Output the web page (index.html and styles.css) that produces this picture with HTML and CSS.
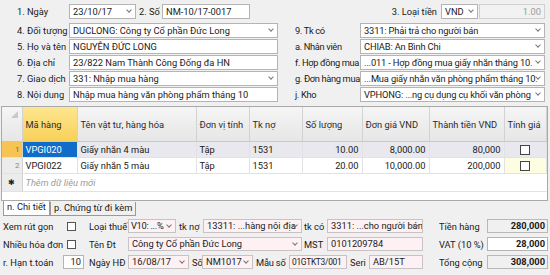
FILE: index.html
```html
<!DOCTYPE html>
<html lang="vi">
<head>
    <meta charset="UTF-8">
    <title>Nhập mua hàng</title>
    <link rel="stylesheet" href="styles.css">
</head>
<body>

    <div class="top">
        <div class="row">
            <label class="lbl">1. Ngày</label>
            <div class="box sel w-date">23/10/17</div>
            <label class="lbl-so">2. Số</label>
            <div class="box w-so">NM-10/17-0017</div>
            <div class="right-group">
                <label class="lbl-tien">3. Loại tiền</label>
                <div class="box sel w-vnd">VND</div>
                <div class="box off w-rate">1.00</div>
            </div>
        </div>
        <div class="row row-gap">
            <label class="lbl">4. Đối tượng</label>
            <div class="box sel w-left">DUCLONG: Công ty Cổ phần Đức Long</div>
            <label class="lbl-r">9. Tk có</label>
            <div class="box sel w-right">3311: Phải trả cho người bán</div>
        </div>
        <div class="row">
            <label class="lbl">5. Họ và tên</label>
            <div class="box w-left">NGUYỄN ĐỨC LONG</div>
            <label class="lbl-r">a. Nhân viên</label>
            <div class="box sel w-right">CHIAB: An Bình Chi</div>
        </div>
        <div class="row">
            <label class="lbl">6. Địa chỉ</label>
            <div class="box w-left">23/822 Nam Thành Công Đống đa HN</div>
            <label class="lbl-r">f. Hợp đồng mua</label>
            <div class="box sel w-right">...011 - Hợp đồng mua giấy nhắn tháng 10.</div>
        </div>
        <div class="row">
            <label class="lbl">7. Giao dịch</label>
            <div class="box sel w-left">331: Nhập mua hàng</div>
            <label class="lbl-r">g. Đơn hàng mua</label>
            <div class="box sel w-right">...Mua giấy nhắn văn phòng phẩm tháng 10.</div>
        </div>
        <div class="row">
            <label class="lbl">8. Nội dung</label>
            <div class="box w-left">Nhập mua hàng văn phòng phẩm tháng 10</div>
            <label class="lbl-r">j. Kho</label>
            <div class="box sel w-right">VPHONG: ...ng cụ dụng cụ khối văn phòng</div>
        </div>
    </div>

    <div class="grid">
        <table>
            <colgroup>
                <col style="width:20px"><col style="width:55px"><col style="width:119px">
                <col style="width:53px"><col style="width:53px"><col style="width:60px">
                <col style="width:67px"><col style="width:75px"><col>
            </colgroup>
            <tr class="head">
                <th class="corner"><span class="tri"></span></th>
                <th class="hot">Mã hàng</th>
                <th>Tên vật tư, hàng hóa</th>
                <th>Đơn vị tính</th>
                <th>Tk nợ</th>
                <th>Số lượng</th>
                <th>Đơn giá VND</th>
                <th>Thành tiền VND</th>
                <th>Tính giá</th>
            </tr>
            <tr class="cur">
                <td class="ind ind-cur">1</td>
                <td class="picked">VPGI020</td>
                <td>Giấy nhắn 4 màu</td>
                <td>Tập</td>
                <td>1531</td>
                <td class="num">10.00</td>
                <td class="num">8,000.00</td>
                <td class="num">80,000</td>
                <td class="chk"><span class="cb"></span></td>
            </tr>
            <tr>
                <td class="ind">2</td>
                <td>VPGI022</td>
                <td>Giấy nhắn 5 màu</td>
                <td>Tập</td>
                <td>1531</td>
                <td class="num">20.00</td>
                <td class="num">10,000.00</td>
                <td class="num">200,000</td>
                <td class="chk focus"><span class="cb"></span></td>
            </tr>
            <tr class="newrow">
                <td class="ind star">✱</td>
                <td colspan="8" class="hint">Thêm dữ liệu mới</td>
            </tr>
        </table>
    </div>

    <div class="tabs">
        <div class="tab active">n. Chi tiết</div>
        <div class="tab">p. Chứng từ đi kèm</div>
    </div>

    <div class="bottom">
        <div class="brow">
            <label class="b-lbl">Xem rút gọn</label>
            <span class="cb cb-form"></span>
            <label class="b-lbl2">Loại thuế</label>
            <div class="box sel pink w-thue">V10: ...%</div>
            <label class="b-lbl3">tk nợ</label>
            <div class="box sel pink w-tkno">13311: ...hàng nội địa</div>
            <label class="b-lbl4">tk có</label>
            <div class="box sel pink w-tkco">3311: ...cho người bán</div>
            <label class="b-tot">Tiền hàng</label>
            <div class="box total off-tot">280,000</div>
        </div>
        <div class="brow">
            <label class="b-lbl">Nhiều hóa đơn</label>
            <span class="cb cb-form"></span>
            <label class="b-lbl2">Tên Đt</label>
            <div class="box sel pink w-tendt">Công ty Cổ phần Đức Long</div>
            <label class="b-lbl4">MST</label>
            <div class="box pink w-tkco">0101209784</div>
            <label class="b-tot">VAT (10 %)</label>
            <div class="box total">28,000</div>
        </div>
        <div class="brow">
            <label class="b-lbl b-han">r. Hạn t.toán</label>
            <div class="box w-han">10</div>
            <label class="b-lbl2 near">Ngày HĐ</label>
            <div class="box sel pink w-ngayhd">16/08/17</div>
            <label class="b-so">Số</label>
            <div class="box sel pink w-sohd">NM1017</div>
            <label class="b-mau">Mẫu số</label>
            <div class="box pink w-mau">01GTKT3/001</div>
            <label class="b-seri">Seri</label>
            <div class="box pink w-seri">AB/15T</div>
            <label class="b-tot">Tổng cộng</label>
            <div class="box total off-tot">308,000</div>
        </div>
    </div>

</body>
</html>
```

FILE: styles.css
```css
body {
    margin: 0;
    background-color: #f0f0f0;
    font-family: 'Roboto', 'Noto Sans', sans-serif;
    font-size: 9.3px;
    color: #1a1a1a;
    width: 550px;
    height: 275px;
    overflow: hidden;
}

/* ---------- top form ---------- */
.top {
    padding: 4px 0 0 17px;
}

.row {
    display: flex;
    align-items: center;
    height: 15px;
    margin-bottom: 1px;
}

.row > *, .right-group > *, .brow > * {
    flex-shrink: 0;
}

.row-gap {
    margin-top: 4px;
}

.lbl {
    width: 52px;
    white-space: nowrap;
}

.lbl-r {
    width: 65px;
    margin-left: 17px;
    white-space: nowrap;
    letter-spacing: -0.35px;
}

.lbl-so {
    width: 23px;
    margin-left: 3px;
    white-space: nowrap;
}

.right-group {
    display: flex;
    align-items: center;
    margin-left: auto;
    margin-right: 5px;
}

.lbl-tien {
    margin-right: 4px;
}

.box {
    position: relative;
    box-sizing: border-box;
    height: 15px;
    line-height: 13px;
    padding: 0 3px;
    background: #fff;
    border: 1px solid #b4b4b4;
    white-space: nowrap;
    overflow: hidden;
}

.sel {
    padding-right: 12px;
}

.sel::after {
    content: "";
    position: absolute;
    right: 4px;
    top: 3px;
    width: 3px;
    height: 3px;
    border-right: 1px solid #777;
    border-bottom: 1px solid #777;
    transform: rotate(45deg);
}

.off {
    background: #f2f2f2;
    border-color: #d0d0d0;
    color: #9a9a9a;
    text-align: right;
}

.w-date { width: 67px; }
.w-so { width: 88px; }
.w-vnd { width: 37px; }
.w-rate { width: 66px; margin-left: 1px; }
.w-left { width: 209px; }
.w-right { width: 185px; letter-spacing: -0.15px; }

/* ---------- grid ---------- */
.grid {
    margin: 4px 2px 0 1px;
    height: 95px;
    background: #fff;
    border: 1px solid #a9a9a9;
    box-sizing: border-box;
}

table {
    width: 100%;
    border-collapse: collapse;
    table-layout: fixed;
}

th, td {
    white-space: nowrap;
    overflow: hidden;
    padding: 0 3px;
    text-align: left;
    font-weight: normal;
}

th {
    height: 34px;
    background: linear-gradient(#f5f5f5, #e6e6e6);
    border-right: 1px solid #d2d2d2;
    border-bottom: 1px solid #c8c8c8;
    color: #2a2a2a;
}

th.hot {
    background: linear-gradient(#fde68f, #f8d058);
}

th.corner {
    position: relative;
    vertical-align: top;
}

.tri {
    position: absolute;
    left: 9px;
    top: 4px;
    width: 0;
    height: 0;
    border-left: 7px solid transparent;
    border-bottom: 7px solid #c9c9c9;
}

td {
    height: 15px;
    border-right: 1px solid #e2e2e2;
    border-bottom: 1px solid #e2e2e2;
}

tr.cur td {
    background: #e8e8ee;
}

td.ind {
    background: #ececec;
    color: #8a8a8a;
    text-align: right;
    font-size: 8px;
    padding-right: 2px;
    border-right: 1px solid #d2d2d2;
}

tr.cur td.ind-cur {
    background: #f6c453;
    color: #7a6a40;
}

tr.cur td.picked {
    background: #0f6cc9;
    color: #fff;
}

td.num {
    text-align: right;
}

td.chk {
    text-align: center;
}

td.focus {
    background: #fdfde2;
}

.cb {
    display: inline-block;
    box-sizing: border-box;
    width: 10px;
    height: 10px;
    border: 1px solid #444;
    background: #fff;
    vertical-align: middle;
}

tr.newrow td {
    height: 17px;
}

td.star {
    text-align: center;
    color: #222;
    font-size: 8px;
    padding: 0;
}

td.hint {
    color: #9a9a9a;
    font-style: italic;
    border-right: none;
}

/* ---------- tabs ---------- */
.tabs {
    display: flex;
    align-items: flex-start;
    padding-left: 3px;
    height: 16px;
}

.tab {
    box-sizing: border-box;
    height: 14px;
    line-height: 12px;
    padding: 0 3px;
    margin-top: 1px;
    border: 1px solid #9a9a9a;
    border-top: none;
    background: #f0f0f0;
}

.tab.active {
    height: 15px;
    margin-top: 0;
    background: #fff;
}

/* ---------- bottom panel ---------- */
.bottom {
    padding: 2px 2px 0 3px;
}

.brow {
    display: flex;
    align-items: center;
    height: 14px;
    margin-bottom: 4px;
}

.brow .box {
    height: 14px;
    line-height: 12px;
}

.pink {
    background: #fdf1f3;
    border-color: #c9c1c3;
}

.b-lbl {
    width: 64px;
    white-space: nowrap;
}

.b-han {
    width: 60px;
}

.cb-form {
    width: 9px;
    height: 9px;
    border-color: #555;
}

.b-lbl2 {
    width: 39px;
    margin-left: 13px;
    white-space: nowrap;
}

.b-lbl2.near {
    margin-left: 5px;
}

.b-lbl3 {
    width: 24px;
    margin-left: 3px;
}

.b-lbl4 {
    width: 23px;
    margin-left: 2px;
}

.b-so {
    width: 10px;
    margin-left: 3px;
}

.b-mau {
    width: 33px;
    margin-left: 3px;
    white-space: nowrap;
    letter-spacing: -0.2px;
}

.b-seri {
    width: 19px;
    margin-left: 3px;
}

.b-tot {
    width: 48px;
    margin-left: 16px;
    white-space: nowrap;
}

.w-thue { width: 48px; padding-left: 2px; letter-spacing: -0.3px; }
.w-tkno { width: 99px; }
.w-tkco { width: 96px; }
.w-tendt { width: 174px; }
.w-han { width: 21px; text-align: right; padding-right: 2px; }
.w-ngayhd { width: 61px; }
.w-sohd { width: 51px; }
.w-mau { width: 58px; padding: 0 1px 0 2px; font-size: 8.4px; letter-spacing: -0.3px; }
.w-seri { width: 54px; }

.total {
    width: 61px;
    text-align: right;
    font-weight: bold;
    padding-right: 2px;
}

.off-tot {
    background: #f0f0f0;
    border-color: #b8b8b8;
}
```
